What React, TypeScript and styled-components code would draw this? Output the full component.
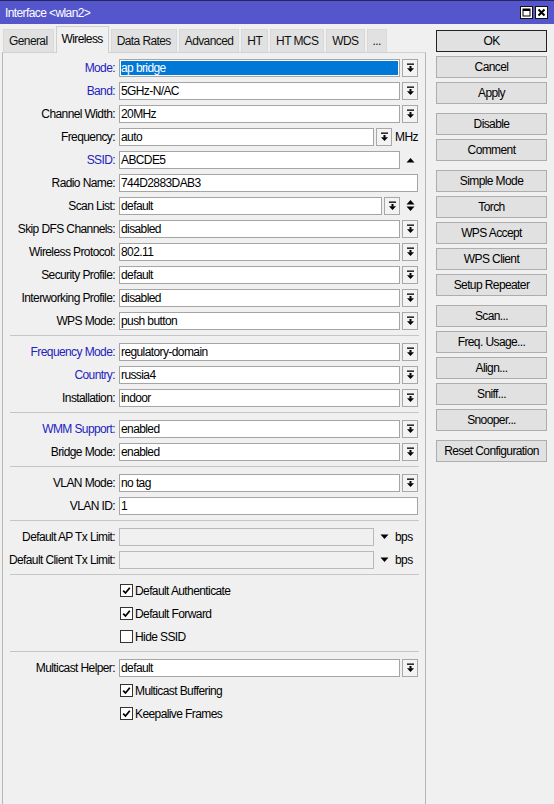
import { FC, ReactNode } from 'react';
import styled, { createGlobalStyle } from 'styled-components';

const GlobalStyle = createGlobalStyle`
    html, body {
        margin: 0;
        padding: 0;
        background: #f0f0f0;
    }
    body {
        font-family: "Liberation Sans", Arial, sans-serif;
        font-size: 12px;
        letter-spacing: -0.6px;
        color: #000;
    }
    * {
        box-sizing: border-box;
    }
`;

const Window = styled.div`
    width: 554px;
    height: 804px;
    display: flex;
    flex-direction: column;
    background: #f0f0f0;
    overflow: hidden;
`;

const TitleBar = styled.div`
    flex: none;
    height: 24px;
    border-top: 1px solid #26265e;
    background: #5555cc;
    color: #fff;
    display: flex;
    align-items: center;
    justify-content: space-between;
    padding: 0 6px 0 5px;
`;

const TitleButtons = styled.div`
    display: flex;
    gap: 2px;
`;

const TitleButton = styled.div`
    width: 13px;
    height: 13px;
    background: #fff;
    border: 1px solid #111;
    display: flex;
    align-items: center;
    justify-content: center;
`;

const Body = styled.div`
    flex: 1;
    display: flex;
    gap: 10px;
    padding: 2px 7px 0 2px;
    min-height: 0;
`;

const LeftCol = styled.div`
    width: 424px;
    display: flex;
    flex-direction: column;
`;

const TabStrip = styled.div`
    display: flex;
    align-items: flex-end;
    gap: 2px;
    padding-left: 1px;
`;

const Tab = styled.div<{ $active?: boolean }>`
    position: relative;
    z-index: ${p => (p.$active ? 1 : 0)};
    height: ${p => (p.$active ? 27 : 23)}px;
    margin-bottom: ${p => (p.$active ? -1 : 0)}px;
    padding: 0 5px ${p => (p.$active ? 3 : 0)}px;
    display: flex;
    align-items: center;
    background: ${p => (p.$active ? '#f0f0f0' : '#e1e1e1')};
    border: 1px solid ${p => (p.$active ? '#cfcfcf' : '#d9d9d9')};
    border-bottom: none;
    color: ${p => (p.$active ? '#000' : '#111')};
`;

const Panel = styled.div`
    flex: 1;
    border: 1px solid #b6b6b6;
    border-top-color: #d2d2d2;
    border-bottom: none;
    padding: 3px 7px 0 0;
`;

const FormRow = styled.div`
    height: 23px;
    display: grid;
    grid-template-columns: 112px 1fr;
    column-gap: 4px;
    align-items: center;
`;

const Label = styled.div<{ $accent?: boolean }>`
    text-align: right;
    white-space: nowrap;
    color: ${p => (p.$accent ? '#2323bd' : '#000')};
`;

const Field = styled.div`
    display: flex;
    align-items: center;
    gap: 2px;
    min-width: 0;
`;

const Input = styled.div<{ $selected?: boolean; $disabled?: boolean }>`
    flex: 1;
    min-width: 0;
    height: 18px;
    line-height: 16px;
    padding: 0 1px;
    border: 1px solid ${p => (p.$disabled ? '#b9b9b9' : '#a5a5a5')};
    background: ${p => (p.$selected ? '#0078d7' : p.$disabled ? '#f0f0f0' : '#fff')};
    color: ${p => (p.$selected ? '#fff' : '#000')};
    box-shadow: ${p => (p.$selected ? 'inset 0 0 0 1px #fff' : 'none')};
    white-space: nowrap;
    overflow: hidden;
`;

const DropButton = styled.div`
    flex: none;
    width: 16px;
    height: 18px;
    border: 1px solid #a8a8a8;
    background: #f3f3f3;
    display: flex;
    align-items: center;
    justify-content: center;
`;

const IconSlot = styled.div`
    flex: none;
    width: 16px;
    height: 18px;
    display: flex;
    align-items: center;
    justify-content: center;
`;

const Unit = styled.span`
    flex: none;
    width: 24px;
    padding-left: 1px;
`;

const Separator = styled.div`
    height: 1px;
    background: #c6c6c6;
    margin: 3px -1px 4px 7px;
`;

const CheckBox = styled.div`
    width: 13px;
    height: 13px;
    margin-left: 1px;
    border: 1px solid #333;
    background: #fff;
    display: flex;
    align-items: center;
    justify-content: center;
`;

const ButtonCol = styled.div`
    width: 111px;
    display: flex;
    flex-direction: column;
    gap: 9px;
    padding-top: 4px;
`;

const ButtonGroup = styled.div`
    display: flex;
    flex-direction: column;
    gap: 4px;
`;

const Button = styled.div<{ $primary?: boolean }>`
    height: 22px;
    display: flex;
    align-items: center;
    justify-content: center;
    background: #e1e1e1;
    border: 1px solid ${p => (p.$primary ? '#222' : '#adadad')};
    white-space: nowrap;
`;

const DropIcon: FC = () => (
    <svg width="9" height="10" viewBox="0 0 9 10">
        <rect x="1" y="0.5" width="7" height="1.3" fill="#000" />
        <rect x="3.5" y="3" width="2" height="2.5" fill="#000" />
        <path d="M1 5.2 H8 L4.5 9 Z" fill="#000" />
    </svg>
);

const UpIcon: FC = () => (
    <svg width="9" height="6" viewBox="0 0 9 6">
        <path d="M0.5 5.5 H8.5 L4.5 1 Z" fill="#000" />
    </svg>
);

const DownIcon: FC = () => (
    <svg width="9" height="6" viewBox="0 0 9 6">
        <path d="M0.5 0.5 H8.5 L4.5 5 Z" fill="#000" />
    </svg>
);

const UpDownIcon: FC = () => (
    <svg width="9" height="13" viewBox="0 0 9 13">
        <path d="M0.5 5.5 H8.5 L4.5 1 Z" fill="#000" />
        <path d="M0.5 7.5 H8.5 L4.5 12 Z" fill="#000" />
    </svg>
);

const CheckMark: FC = () => (
    <svg width="9" height="9" viewBox="0 0 9 9">
        <path d="M1.2 4.6 L3.5 7 L7.8 1.8" stroke="#000" strokeWidth="1.8" fill="none" />
    </svg>
);

interface RowProps {
    label?: string;
    accent?: boolean;
    children: ReactNode;
}

const Row: FC<RowProps> = ({ label, accent, children }) => (
    <FormRow>
        <Label $accent={accent}>{label ? `${label}:` : ''}</Label>
        <Field>{children}</Field>
    </FormRow>
);

const Select: FC<{ value: string; selected?: boolean }> = ({ value, selected }) => (
    <>
        <Input $selected={selected}>{value}</Input>
        <DropButton><DropIcon /></DropButton>
    </>
);

const Check: FC<{ label: string; checked?: boolean }> = ({ label, checked }) => (
    <Row>
        <CheckBox>{checked && <CheckMark />}</CheckBox>
        <span>{label}</span>
    </Row>
);

const TABS = ['General', 'Wireless', 'Data Rates', 'Advanced', 'HT', 'HT MCS', 'WDS', '...'];

const BUTTON_GROUPS = [
    ['OK', 'Cancel', 'Apply'],
    ['Disable', 'Comment'],
    ['Simple Mode', 'Torch', 'WPS Accept', 'WPS Client', 'Setup Repeater'],
    ['Scan...', 'Freq. Usage...', 'Align...', 'Sniff...', 'Snooper...'],
    ['Reset Configuration'],
];

const App: FC = () => {
    return (
        <Window>
            <GlobalStyle />
            <TitleBar>
                <span>{'Interface <wlan2>'}</span>
                <TitleButtons>
                    <TitleButton>
                        <svg width="9" height="9" viewBox="0 0 9 9">
                            <rect x="1" y="1" width="7" height="7" stroke="#000" strokeWidth="1" fill="none" />
                            <rect x="1" y="1" width="7" height="2" fill="#000" />
                        </svg>
                    </TitleButton>
                    <TitleButton>
                        <svg width="9" height="9" viewBox="0 0 9 9">
                            <path d="M1.5 1.5 L7.5 7.5 M7.5 1.5 L1.5 7.5" stroke="#000" strokeWidth="2" />
                        </svg>
                    </TitleButton>
                </TitleButtons>
            </TitleBar>
            <Body>
                <LeftCol>
                    <TabStrip>
                        {TABS.map(t => (
                            <Tab key={t} $active={t === 'Wireless'}>{t}</Tab>
                        ))}
                    </TabStrip>
                    <Panel>
                        <Row label="Mode" accent><Select value="ap bridge" selected /></Row>
                        <Row label="Band" accent><Select value="5GHz-N/AC" /></Row>
                        <Row label="Channel Width"><Select value="20MHz" /></Row>
                        <Row label="Frequency">
                            <Select value="auto" />
                            <Unit>MHz</Unit>
                        </Row>
                        <Row label="SSID" accent>
                            <Input>ABCDE5</Input>
                            <IconSlot><UpIcon /></IconSlot>
                        </Row>
                        <Row label="Radio Name"><Input>744D2883DAB3</Input></Row>
                        <Row label="Scan List">
                            <Select value="default" />
                            <IconSlot><UpDownIcon /></IconSlot>
                        </Row>
                        <Row label="Skip DFS Channels"><Select value="disabled" /></Row>
                        <Row label="Wireless Protocol"><Select value="802.11" /></Row>
                        <Row label="Security Profile"><Select value="default" /></Row>
                        <Row label="Interworking Profile"><Select value="disabled" /></Row>
                        <Row label="WPS Mode"><Select value="push button" /></Row>
                        <Separator />
                        <Row label="Frequency Mode" accent><Select value="regulatory-domain" /></Row>
                        <Row label="Country" accent><Select value="russia4" /></Row>
                        <Row label="Installation"><Select value="indoor" /></Row>
                        <Separator />
                        <Row label="WMM Support" accent><Select value="enabled" /></Row>
                        <Row label="Bridge Mode"><Select value="enabled" /></Row>
                        <Separator />
                        <Row label="VLAN Mode"><Select value="no tag" /></Row>
                        <Row label="VLAN ID"><Input>1</Input></Row>
                        <Separator />
                        <Row label="Default AP Tx Limit">
                            <Input $disabled />
                            <IconSlot><DownIcon /></IconSlot>
                            <Unit>bps</Unit>
                        </Row>
                        <Row label="Default Client Tx Limit">
                            <Input $disabled />
                            <IconSlot><DownIcon /></IconSlot>
                            <Unit>bps</Unit>
                        </Row>
                        <Separator />
                        <Check label="Default Authenticate" checked />
                        <Check label="Default Forward" checked />
                        <Check label="Hide SSID" />
                        <Separator />
                        <Row label="Multicast Helper"><Select value="default" /></Row>
                        <Check label="Multicast Buffering" checked />
                        <Check label="Keepalive Frames" checked />
                    </Panel>
                </LeftCol>
                <ButtonCol>
                    {BUTTON_GROUPS.map((group, i) => (
                        <ButtonGroup key={i}>
                            {group.map(name => (
                                <Button key={name} $primary={name === 'OK'}>{name}</Button>
                            ))}
                        </ButtonGroup>
                    ))}
                </ButtonCol>
            </Body>
        </Window>
    );
};

export default App;
